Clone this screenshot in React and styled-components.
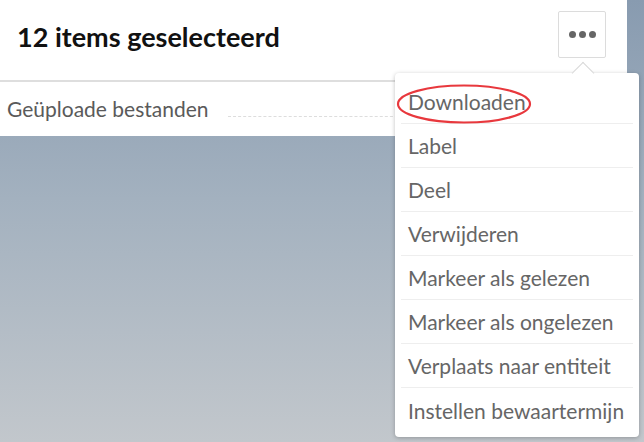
import React from 'react'
import styled, { createGlobalStyle } from 'styled-components'

const items = [
  'Downloaden',
  'Label',
  'Deel',
  'Verwijderen',
  'Markeer als gelezen',
  'Markeer als ongelezen',
  'Verplaats naar entiteit',
  'Instellen bewaartermijn',
]

const App = () => {
  return (
    <Page>
      <GlobalStyle />
      <Main>
        <Header>
          <Title>12 items geselecteerd</Title>
          <MoreButton>
            <Dot />
            <Dot />
            <Dot />
          </MoreButton>
        </Header>
        <SubRow>
          <SubLabel>Geüploade bestanden</SubLabel>
          <Dashed />
        </SubRow>
      </Main>
      <Menu>
        <Caret />
        {items.map((item, i) => (
          <MenuItem key={item} $last={i === items.length - 1}>
            {item}
          </MenuItem>
        ))}
        <Highlight width="140" height="42" viewBox="0 0 140 42">
          <ellipse cx="69" cy="21" rx="66" ry="18.5" fill="none" stroke="#e8383d" strokeWidth="2.2" />
        </Highlight>
      </Menu>
    </Page>
  )
}

export default App

const GlobalStyle = createGlobalStyle`
  html, body {
    margin: 0;
    padding: 0;
  }
  body {
    font-family: Lato, "Open Sans", sans-serif;
  }
`

const Page = styled.div`
  position: relative;
  width: 644px;
  height: 442px;
  overflow: hidden;
  background: linear-gradient(180deg, #889bb0 0%, #a3b1bf 45%, #c2c7cc 100%);
`

const Main = styled.div`
  width: 627px;
  display: flex;
  flex-direction: column;
`

const Header = styled.div`
  height: 80px;
  background: #fff;
  border-bottom: 2px solid #dedede;
  display: flex;
  align-items: center;
  justify-content: space-between;
  padding: 0 21px 0 17px;
  box-sizing: content-box;
`

const Title = styled.h1`
  margin: 0 0 8px;
  font-size: 27px;
  font-weight: 700;
  color: #111;
  letter-spacing: 0;
`

const MoreButton = styled.div`
  width: 46px;
  height: 45px;
  margin-bottom: 11px;
  border: 1px solid #dcdcdc;
  border-radius: 2px;
  display: flex;
  align-items: center;
  justify-content: center;
  gap: 3px;
`

const Dot = styled.span`
  width: 7px;
  height: 7px;
  border-radius: 50%;
  background: #666;
`

const SubRow = styled.div`
  height: 54px;
  background: #fff;
  display: flex;
  align-items: center;
  padding-left: 7px;
`

const SubLabel = styled.span`
  font-size: 21px;
  color: #5a5a5a;
  margin-top: -2px;
`

const Dashed = styled.div`
  width: 175px;
  margin-left: 19px;
  margin-top: 14px;
  border-top: 1px dashed #ddd;
`

const Menu = styled.div`
  position: absolute;
  left: 395px;
  top: 73px;
  width: 244px;
  padding: 7px 0 5px;
  background: #fff;
  border-radius: 4px;
  box-shadow: 0 1px 4px rgba(0, 0, 0, 0.25);
`

const Caret = styled.div`
  position: absolute;
  top: -8px;
  left: 180px;
  width: 15px;
  height: 15px;
  background: #fff;
  border-top: 1px solid #d8d8d8;
  border-left: 1px solid #d8d8d8;
  transform: rotate(45deg);
`

const MenuItem = styled.div`
  height: 44px;
  margin: 0 6px;
  padding-left: 7px;
  display: flex;
  align-items: center;
  font-size: 21px;
  color: #666;
  white-space: nowrap;
  border-bottom: ${(p) => (p.$last ? 'none' : '1px solid #eee')};
  box-sizing: border-box;
`

const Highlight = styled.svg`
  position: absolute;
  left: 0;
  top: 10px;
  pointer-events: none;
`
